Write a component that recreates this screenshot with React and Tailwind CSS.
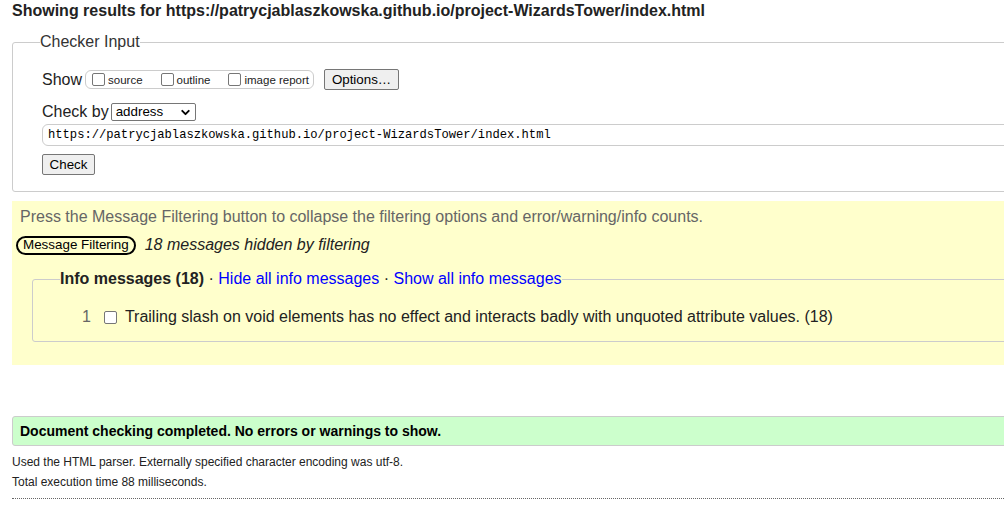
import { ChevronDown } from 'lucide-react';

const checkUrl = 'https://patrycjablaszkowska.github.io/project-WizardsTower/index.html';

function Box() {
    return <span className="inline-block w-[13px] h-[13px] rounded-[2px] border border-[#767676] bg-white" />;
}

function NativeButton({ children, className = '' }) {
    return (
        <button className={`bg-[#efefef] border border-[#767676] rounded-[2px] text-[13.33px] text-black leading-none ${className}`}>
            {children}
        </button>
    );
}

export default function App() {
    return (
        <div className="w-full overflow-hidden bg-white">
            <div className="w-[1060px] px-3 text-[#222] font-['Liberation_Sans',Arial,sans-serif]">
                <h2 className="text-base font-bold leading-[18px] pt-[2px]">
                    Showing results for {checkUrl}
                </h2>

                <fieldset className="mt-[13px] border border-[#ccc] rounded-[3px] pl-[29px] pb-4">
                    <legend className="-ml-[2px] text-base leading-[18px] text-[#333]">Checker Input</legend>

                    <div className="flex items-center mt-[18px] h-[21px]">
                        <span className="text-base">Show</span>
                        <div className="flex items-center ml-[3px] h-[19px] border border-[#ccc] rounded-[6px] pl-[6px] pr-[4px] text-[11.5px]">
                            <Box />
                            <span className="ml-[3px] mr-[18px] mt-[2px]">source</span>
                            <Box />
                            <span className="ml-[3px] mr-[18px] mt-[2px]">outline</span>
                            <Box />
                            <span className="ml-[3px] mt-[2px]">image report</span>
                        </div>
                        <NativeButton className="ml-[10px] h-[21px] w-[75px]">Options…</NativeButton>
                    </div>

                    <div className="flex items-center mt-[13px] h-[18px]">
                        <span className="text-base">Check by</span>
                        <div className="ml-[2px] flex items-center justify-between w-[85px] h-[18px] border border-[#767676] rounded-[2px] bg-white pl-[4px] pr-[3px] text-[13.33px] text-black">
                            address
                            <ChevronDown size={13} strokeWidth={3.5} />
                        </div>
                    </div>

                    <div className="mt-[3px] h-[22px] border border-[#ccc] rounded-[6px] flex items-center pl-[5px] font-['Liberation_Mono','Courier_New',monospace] text-[12.15px] text-black">
                        {checkUrl}
                    </div>

                    <NativeButton className="mt-[8px] h-[21px] w-[53px] block">Check</NativeButton>
                </fieldset>

                <div className="mt-[9px] bg-[#ffffcc] h-[164px] pt-[7px]">
                    <p className="pl-2 text-base leading-[18px] text-[#666]">
                        Press the Message Filtering button to collapse the filtering options and error/warning/info counts.
                    </p>
                    <div className="flex items-center mt-[7px] pl-1">
                        <button className="h-[19px] px-[5px] border-2 border-black rounded-full text-[13.4px] leading-none text-black">
                            Message Filtering
                        </button>
                        <span className="ml-[9px] text-base italic">18 messages hidden by filtering</span>
                    </div>

                    <fieldset className="mt-[13px] ml-5 border border-[#ccc] rounded-[3px] pl-[49px] h-[72px]">
                        <legend className="-ml-[22px] text-base leading-[18px]">
                            <span className="font-bold">Info messages (18)</span>
                            {' · '}
                            <span className="text-[#0000ff]">Hide all info messages</span>
                            {' · '}
                            <span className="text-[#0000ff]">Show all info messages</span>
                        </legend>
                        <div className="flex items-center mt-[17px] text-base">
                            <span className="text-[#666]">1</span>
                            <span className="ml-[13px] flex"><Box /></span>
                            <span className="ml-[8px]">Trailing slash on void elements has no effect and interacts badly with unquoted attribute values. (18)</span>
                        </div>
                    </fieldset>
                </div>

                <div className="mt-[51px] h-[30px] bg-[#ccffcc] border border-[#ccc] rounded-[3px] flex items-center pl-[7px] text-[14px] font-bold text-black">
                    Document checking completed. No errors or warnings to show.
                </div>
                <p className="mt-[9px] text-[12px] leading-[14px]">
                    Used the HTML parser. Externally specified character encoding was utf-8.
                </p>
                <p className="mt-[6px] text-[12px] leading-[14px]">Total execution time 88 milliseconds.</p>
                <div className="mt-[9px] border-t border-dotted border-[#666]" />
                <div className="h-4" />
            </div>
        </div>
    );
}
